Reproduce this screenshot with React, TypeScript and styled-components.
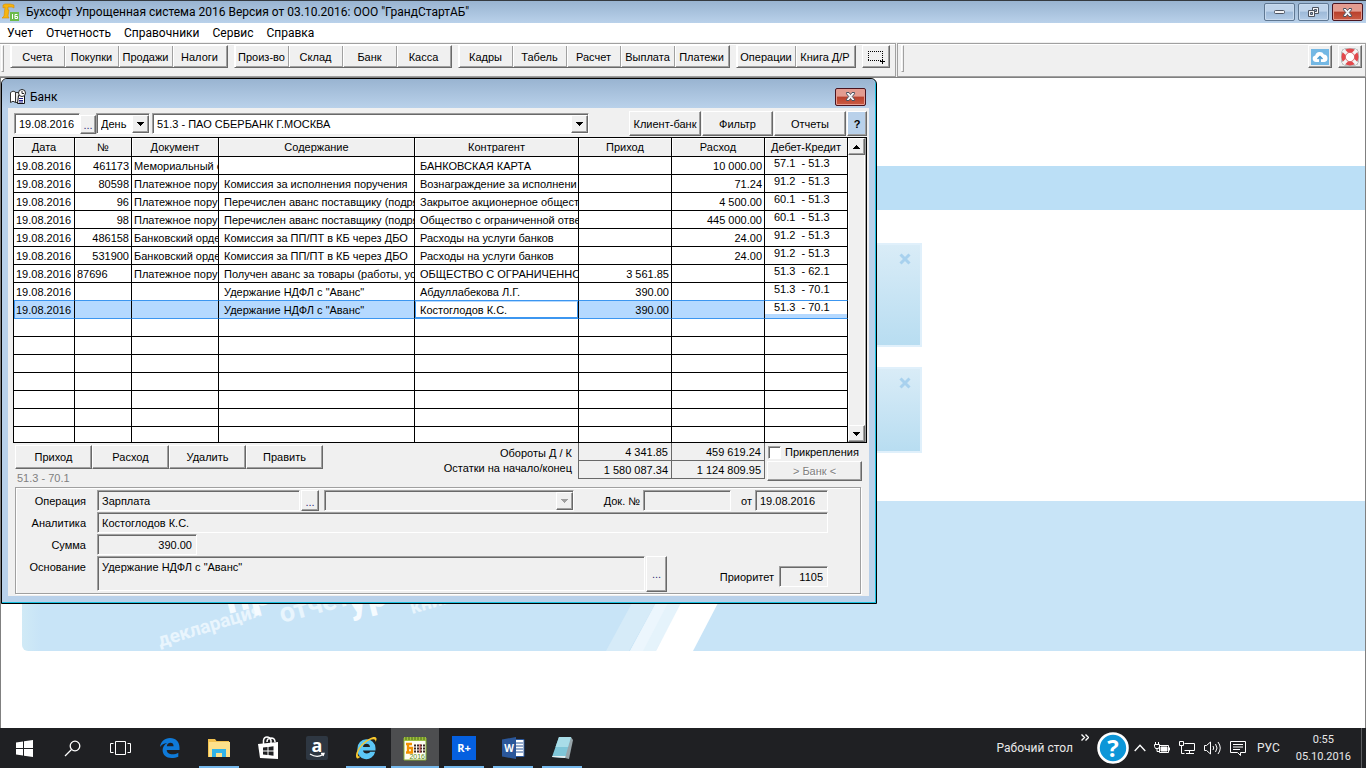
import React from "react";
import styled, { createGlobalStyle, css } from "styled-components";

const uiFont = `"Liberation Sans", Arial, sans-serif`;
const shellFont = `Roboto, "Open Sans", sans-serif`;

const Global = createGlobalStyle`
  * { box-sizing: border-box; }
  body { margin: 0; background: #fff; font: 11px/14px ${uiFont}; color: #000; }
  button, input, select, textarea { font: inherit; color: inherit; margin: 0; border-radius: 0; outline: none; }
`;

const raised = css`
  border: 1px solid;
  border-color: #fff #696969 #696969 #fff;
  box-shadow: inset -1px -1px #a0a0a0;
  background: #f0f0f0;
`;
const sunken = css`
  border: 1px solid;
  border-color: #a0a0a0 #fff #fff #a0a0a0;
  box-shadow: inset 1px 1px #696969;
`;

const Page = styled.div`
  min-height: 100vh;
  display: flex;
  flex-direction: column;
`;

/* ---------- main title bar, menu, toolbar ---------- */

const TitleBar = styled.header`
  height: 23px;
  display: flex;
  align-items: center;
  padding: 0 3px 0 2px;
  gap: 7px;
  border-top: 1px solid #353a40;
  background: linear-gradient(#99b4d1, #b9d1ea);
  font: 12px/20px ${shellFont};
  white-space: nowrap;
`;
const Caption = styled.h1`
  flex: 1;
  margin: 0;
  font: inherit;
`;
const CaptionButtons = styled.div`
  display: flex;
  gap: 3px;
`;
const CaptionButton = styled.button<{ $close?: boolean }>`
  width: 31px;
  height: 18px;
  padding: 0;
  display: grid;
  place-items: center;
  border-radius: 2px;
  border: 1px solid ${(p) => (p.$close ? "#4a1520" : "#5f7792")};
  box-shadow: inset 0 0 0 1px ${(p) => (p.$close ? "#e49c92" : "#c8daee")};
  background: ${(p) =>
    p.$close
      ? "linear-gradient(#e39c90 45%, #b8402c 50%, #cb5c44)"
      : "linear-gradient(#bfd3ea 45%, #9db9d8 50%, #b3cbe6)"};
`;
const MenuBar = styled.nav`
  height: 19px;
  display: flex;
  gap: 13px;
  padding: 0 7px;
  background: #fff;
  font: 12px/20px ${shellFont};
`;
const MenuLink = styled.a`
  color: #000;
  text-decoration: none;
`;
const Rebars = styled.div`
  display: flex;
  gap: 1px;
  height: 35px;
  border-top: 1px solid #f0f0f0;
  background: #f0f0f0;
`;
const Band = styled.div<{ $grow?: boolean }>`
  flex: ${(p) => (p.$grow ? "1" : "none")};
  display: flex;
  gap: 6px;
  align-items: flex-start;
  padding: ${(p) => (p.$grow ? "1px 3px 0 3px" : "1px 5px 0 1px")};
  border: 1px solid #a0a0a0;
  border-left-width: ${(p) => (p.$grow ? "1px" : "0")};
  box-shadow: inset 0 1px #fff;
`;
const Gripper = styled.i`
  width: 3px;
  height: 27px;
  border: 1px solid;
  border-color: #fff #a0a0a0 #a0a0a0 #fff;
`;
const ToolGroup = styled.div`
  display: flex;
  border: 1px solid;
  border-color: #fff #696969 #696969 #fff;
`;
const ToolButton = styled.button<{ $wide?: boolean }>`
  width: ${(p) => (p.$wide ? "59px" : "54px")};
  height: 21px;
  padding: 0;
  border: 0;
  border-right: 1px solid #a0a0a0;
  box-shadow: inset 1px 0 #fff, inset 0 -1px #a0a0a0;
  background: #f0f0f0;
  white-space: nowrap;
`;
const IconTool = styled.button<{ $w: number }>`
  ${raised}
  width: ${(p) => p.$w}px;
  height: 23px;
  padding: 0;
  display: grid;
  place-items: center;
`;
const Spring = styled.span`
  flex: 1;
`;

/* ---------- workspace and its backdrop ---------- */

const Workspace = styled.main`
  position: relative;
  flex: 1;
  min-height: 600px;
  overflow: hidden;
  border: 1px solid #808080;
  border-bottom: 0;
  background: #fff;
`;
const Backdrop = styled.div`
  padding-top: 88px;
`;
const Banner = styled.div`
  height: 44px;
  margin-bottom: 33px;
  background: #bbdff6;
`;
const Tile = styled.div<{ $h: number }>`
  width: 900px;
  height: ${(p) => p.$h}px;
  margin: 0 0 20px 21px;
  padding: 8px 9px;
  text-align: right;
  border: 2px solid #e0f0fb;
  background: linear-gradient(#d9ecf7, #b8ddf1);
`;
const Promo = styled.div`
  height: 150px;
  margin: 48px 0 0 21px;
  border-radius: 0 0 0 6px;
  overflow: hidden;
  background: linear-gradient(90deg, #d0eaf6, #c8e4f7 18px);
`;

/* ---------- bank window ---------- */

const BankWindow = styled.section`
  position: absolute;
  left: 0;
  top: 0;
  width: 876px;
  border: 1px solid #000;
  border-radius: 6px 6px 0 0;
  background: #b9d1ea;
  box-shadow: inset -1px -1px #18c0e0;
  padding: 0 7px 7px 6px;
`;
const WindowTitle = styled.div`
  display: flex;
  align-items: center;
  gap: 3px;
  height: 29px;
  margin: 0 -6px;
  padding: 6px 9px 0 8px;
  border-radius: 5px 5px 0 0;
  background: linear-gradient(#99b4d1, #b9d1ea);
  font: 12px/20px ${shellFont};
`;
const WindowName = styled.h2`
  flex: 1;
  margin: 0;
  font: inherit;
`;
const Client = styled.div`
  padding: 3px 2px 2px 5px;
  background: #f0f0f0;
`;
const FilterRow = styled.div`
  display: flex;
  height: 26px;
  padding-left: 1px;
  align-items: flex-start;
`;
const Field = styled.input<{ $w?: number }>`
  ${sunken}
  width: ${(p) => (p.$w ? `${p.$w}px` : "100%")};
  height: 21px;
  padding: 1px 4px 0;
  background: ${(p) => (p.readOnly ? "#f0f0f0" : "#fff")};
`;
const NumberField = styled(Field)`
  text-align: right;
`;
const DateSlot = styled.div`
  display: flex;
  align-items: flex-end;
  padding-top: 2px;
`;
const Dots = styled.button<{ $w?: number; $h?: number }>`
  ${raised}
  flex: none;
  width: ${(p) => p.$w ?? 16}px;
  height: ${(p) => p.$h ?? 19}px;
  padding: 0;
  color: #30307a;
`;
const Combo = styled.div<{ $w: number }>`
  position: relative;
  width: ${(p) => p.$w}px;
  height: 21px;
`;
const ComboSelect = styled.select`
  ${sunken}
  appearance: none;
  width: 100%;
  height: 21px;
  padding: 0 20px 0 4px;
  background: #fff;
  opacity: 1;
  &:disabled { background: #f0f0f0; }
`;
const ComboArrow = styled.span<{ $off?: boolean }>`
  ${raised}
  position: absolute;
  right: 1px;
  top: 2px;
  width: 17px;
  height: 18px;
  display: grid;
  place-items: center;
  pointer-events: none;
  color: ${(p) => (p.$off ? "#a0a0a0" : "#000")};
`;
const PushButton = styled.button<{ $w: number; $h?: number }>`
  ${raised}
  width: ${(p) => p.$w}px;
  height: ${(p) => p.$h ?? 25}px;
  padding: 0;
  &:disabled { color: #808080; text-shadow: 1px 1px #fff; }
`;
const HelpButton = styled(PushButton)`
  background: #b9d1ea;
  font-weight: 700;
`;
const FilterCombos = styled.div`
  flex: 1;
  display: flex;
  gap: 2px;
  padding-top: 2px;
`;
const FilterActions = styled.div`
  display: flex;
  gap: 1px;
`;

/* ---------- journal table ---------- */

const GridFrame = styled.div`
  display: flex;
  border: 1px solid #000;
  border-bottom: 0;
`;
const Journal = styled.table`
  width: calc(100% - 18px);
  table-layout: fixed;
  border-collapse: separate;
  border-spacing: 0;
`;
const Head = styled.th`
  height: 19px;
  padding: 1px 0 0;
  font-weight: 400;
  line-height: 17px;
  border: solid #000;
  border-width: 0 1px 1px 0;
  background: #f0f0f0;
  box-shadow: inset 1px 1px #fff;
  white-space: nowrap;
`;
const Cell = styled.td<{ $num?: boolean; $indent?: boolean; $editing?: boolean }>`
  height: 18px;
  padding: ${(p) => (p.$editing ? "0" : p.$indent ? "1px 0 0 5px" : "1px 2px 0")};
  line-height: 16px;
  text-align: ${(p) => (p.$num ? "right" : "left")};
  vertical-align: top;
  white-space: nowrap;
  overflow: hidden;
  border: solid #000;
  border-width: 0 1px 1px 0;
`;
const Row = styled.tr<{ $selected?: boolean; $above?: boolean; $last?: boolean }>`
  background: ${(p) => (p.$selected ? "#b5d9ff" : "#fff")};
  ${(p) => (p.$selected || p.$above) && css`${Cell} { border-bottom-color: #3c96f0; }`}
  ${(p) => p.$selected && css`${Cell}:first-child { box-shadow: inset 1px 0 #3c96f0; }`}
  ${(p) => p.$last && css`${Cell} { height: 16px; line-height: 14px; }`}
`;
const Account = styled.span`
  display: block;
  height: 13px;
  padding-left: 9px;
  line-height: 12px;
  white-space: pre;
  background: #fff;
`;
const AccountCell = styled(Cell)`
  padding: 0;
`;
const CellEditor = styled.input`
  display: block;
  width: 100%;
  height: 17px;
  padding: 0 4px;
  line-height: 15px;
  border: 1px solid #3c96f0;
  border-top-color: #b5d9ff;
  background: #fff;
`;
const ScrollTrack = styled.div`
  width: 18px;
  display: flex;
  flex-direction: column;
  justify-content: space-between;
  border-bottom: 1px solid #000;
  background: #f0f0f0;
  box-shadow: inset -1px 0 #a0a0a0, inset -2px 0 #fff, inset 1px 0 #fff, inset 2px 0 #f0f0f0;
`;
const ScrollArrow = styled.button`
  ${raised}
  width: 17px;
  height: 17px;
  padding: 0;
  display: grid;
  place-items: center;
`;

/* ---------- totals strip ---------- */

const Strip = styled.div`
  display: flex;
  height: 44px;
`;
const StripLeft = styled.div`
  padding: 2px 0 0 2px;
`;
const ButtonRow = styled.div`
  display: flex;
`;
const Status = styled.p`
  margin: 2px 0 0 2px;
  color: #808080;
`;
const TotalLabels = styled.div`
  flex: 1;
  padding: 3px 6px 0 0;
  text-align: right;
  line-height: 15px;
`;
const Totals = styled.table`
  align-self: flex-start;
  table-layout: fixed;
  width: 187px;
  border-collapse: separate;
  border-spacing: 0;
  border-left: 1px solid #696969;
`;
const TotalCell = styled.td`
  height: 18px;
  padding: 1px 3px 0;
  line-height: 16px;
  text-align: right;
  border: solid #696969;
  border-width: 0 1px 1px 0;
`;
const StripRight = styled.div`
  width: 102px;
  padding: 2px 0 0 2px;
  display: flex;
  flex-direction: column;
  gap: 2px;
`;
const CheckLabel = styled.label`
  display: flex;
  align-items: center;
  gap: 4px;
  height: 14px;
  padding-left: 1px;
`;
const Check = styled.input`
  ${sunken}
  appearance: none;
  width: 13px;
  height: 13px;
  background: #fff;
`;

/* ---------- details ---------- */

const Details = styled.fieldset`
  margin: 0 6px 0 2px;
  min-width: 0;
  height: 107px;
  padding: 2px 32px 0 0;
  border: 1px solid #a0a0a0;
  box-shadow: inset 1px 1px #fff, 1px 1px #fff;
`;
const Line = styled.div`
  display: flex;
  align-items: flex-start;
  height: 22px;
  line-height: 22px;
`;
const FieldLabel = styled.label`
  flex: none;
  width: 81px;
  padding-right: 11px;
  text-align: right;
`;
const SideLabel = styled.label`
  flex: 1;
  padding-right: 3px;
  text-align: right;
`;
const Gap = styled.span<{ $w: number }>`
  width: ${(p) => p.$w}px;
`;
const Memo = styled.textarea`
  ${sunken}
  width: 548px;
  height: 35px;
  padding: 3px 4px;
  resize: none;
  line-height: 14px;
  background: #f0f0f0;
`;
const Priority = styled.div`
  flex: 1;
  display: flex;
  padding-top: 10px;
`;
const PriorityLabel = styled(SideLabel)`
  padding-right: 5px;
`;

/* ---------- taskbar ---------- */

const Taskbar = styled.footer`
  height: 40px;
  display: flex;
  justify-content: space-between;
  background: #1f2023;
  color: #e8e8e8;
  font: 12px/16px ${shellFont};
`;
const TaskIcons = styled.div`
  display: flex;
`;
const Apps = styled.div`
  display: flex;
  gap: 1px;
  padding-left: 2px;
`;
const Task = styled.button<{ $running?: boolean; $active?: boolean }>`
  width: 48px;
  height: 40px;
  padding: 0;
  border: 0;
  display: grid;
  place-items: center;
  background: ${(p) => (p.$active ? "#4d4e50" : "transparent")};
  ${(p) =>
    (p.$running || p.$active) &&
    css`
      background-image: linear-gradient(#76b9ed, #76b9ed);
      background-repeat: no-repeat;
      background-size: ${p.$active ? "48px" : "40px"} 2px;
      background-position: center bottom;
    `}
`;
const Tray = styled.div`
  display: flex;
  align-items: center;
  gap: 8px;
  white-space: nowrap;
`;
const Overflow = styled.span`
  align-self: flex-start;
  padding-top: 1px;
`;
const HelpSlot = styled.span`
  display: flex;
  margin-right: -3px;
`;
const Language = styled.span`
  padding-left: 3px;
`;
const Clock = styled.time`
  padding: 0 10px 0 8px;
  text-align: center;
  font-size: 11px;
  line-height: 17px;
`;
const Peek = styled.i`
  width: 5px;
  height: 40px;
  margin-left: -8px;
  border-left: 1px solid #5c5d60;
`;

/* ---------- drawings ---------- */

const CloseMark = () => (
  <svg width="13" height="11" viewBox="0 0 13 11" aria-hidden="true">
    <path d="M2.5 1.5h2.5l1.5 2 1.5-2h2.5v1.3L8.3 5.5l2.2 2.7v1.3H8l-1.5-2-1.5 2H2.5V8.2l2.2-2.7-2.2-2.7z" fill="#f4f4f6" stroke="#4c5360" />
  </svg>
);
const MinMark = () => (
  <svg width="12" height="6" viewBox="0 0 12 6" aria-hidden="true">
    <rect x=".5" y="1.5" width="10" height="3" rx="1" fill="#f4f4f6" stroke="#4c5360" />
  </svg>
);
const RestoreMark = () => (
  <svg width="13" height="11" viewBox="0 0 13 11" aria-hidden="true">
    <path d="M5.500.5h6v6h-6z" fill="#f4f4f6" stroke="#4c5360" />
    <path d="M7.500 2.500h2v2h-2z" fill="#8ba7c6" stroke="#4c5360" />
    <path d="M1.500 3.500h6v6h-6z" fill="#f4f4f6" stroke="#4c5360" />
    <path d="M3.500 5.500h2v2h-2z" fill="#8ba7c6" stroke="#4c5360" />
  </svg>
);
const Triangle = ({ up = false }: { up?: boolean }) => (
  <svg width="7" height="4" viewBox="0 0 7 4" aria-hidden="true" shapeRendering="crispEdges">
    <path d={up ? "M0 4h7L3.500 0z" : "M0 0h7L3.500 4z"} fill="currentColor" />
  </svg>
);
const AppLogo = () => (
  <svg width="17" height="18" viewBox="0 0 17 18" aria-hidden="true">
    <path d="M1 2l2-1h5l4 1v3l-2-1H6v3h1l-1 6 1 2H0l2-2 1-9-2 1z" fill="#f6b50f" stroke="#d98b00" strokeWidth=".6" />
    <path d="M8 9h9v9H8z" fill="#6cbb4a" />
    <path d="M10.500 11v5M15.500 11.500H13v4h2.500v-2H13" stroke="#fff" fill="none" />
  </svg>
);
const BookIcon = () => (
  <svg width="17" height="16" viewBox="0 0 17 16" aria-hidden="true">
    <path d="M.5 3.500Q3 1 5.500 3v10.500Q3 11 .5 13.500z" fill="#fff" stroke="#333" />
    <path d="M5.500 3.500h4v10h-4z" fill="#e8e8e8" stroke="#333" />
    <path d="M8.500 6.500h6v8h-7z" fill="#fff" stroke="#111" />
    <path d="M9 9.500h4M9 11.500h4M9 13h4" stroke="#22228a" />
    <circle cx="12" cy="4" r="3.500" fill="#fff" stroke="#222" />
    <path d="M12 2v2.500h2" stroke="#222" fill="none" />
  </svg>
);
const MarqueeIcon = () => (
  <svg width="18" height="14" viewBox="0 0 18 14" shapeRendering="crispEdges" aria-hidden="true">
    <path d="M1 1.500h14M1 10.500h14M1.500 1v10M15.500 1v8" stroke="#000" strokeDasharray="1 1" fill="none" />
    <path d="M13 11.500h5M15.500 9v5" stroke="#000" />
  </svg>
);
const CloudIcon = () => (
  <svg width="18" height="16" viewBox="0 0 18 16" aria-hidden="true">
    <path d="M0 0h18v16H0z" fill="#74b8e4" />
    <path d="M5 13a3.300 3.300 0 0 1-.8-6.500A4.800 4.800 0 0 1 13 5.500 3.800 3.800 0 0 1 13.500 13z" fill="#fff" />
    <path d="M9 13V8M6.500 10L9 7.500 11.500 10" stroke="#4a9bd0" strokeWidth="1.500" fill="none" />
  </svg>
);
const LifeRing = () => (
  <svg width="18" height="18" viewBox="0 0 18 18" aria-hidden="true">
    <rect x="1" y="1" width="16" height="16" rx="3" fill="none" stroke="#8d8d8d" strokeWidth="1" />
    <circle cx="9" cy="9" r="6.500" fill="#fff" stroke="#e4484c" strokeWidth="4" />
    <path d="M2 2l4 4M16 2l-4 4M2 16l4-4M16 16l-4-4" stroke="#f4f4f4" strokeWidth="3.400" />
    <circle cx="9" cy="9" r="4.600" fill="#fff" stroke="#c8393e" strokeWidth=".7" />
  </svg>
);
const TileCross = () => (
  <svg width="12" height="12" viewBox="0 0 12 12" aria-hidden="true">
    <path d="M1.500 1.500l9 9M10.500 1.500l-9 9" stroke="#a8d1ee" strokeWidth="3" />
  </svg>
);
const PromoArt = () => (
  <svg width="720" height="150" viewBox="0 0 720 150" aria-hidden="true">
    <path d="M610 102h24L607 150h-23z" fill="#d6ebf8" />
    <path d="M634 102h26L634 150h-26z" fill="#e5f3fb" />
    <path d="M634 102h12L621 150h-13z" fill="#ecf6fd" />
    <path d="M659 102h37L671 150h-37z" fill="#fff" />
    <g fontFamily="Roboto" fontWeight="700" fill="#e9f5fd">
      <text transform="translate(138 146) rotate(-17)" fontSize="19">декларация</text>
      <text transform="translate(260 122) rotate(-15)" fontSize="27">отчет</text>
      <text transform="translate(206 113) rotate(-14)" fontSize="42" fill="#f6fbff">пр</text>
      <text transform="translate(328 113) rotate(-14)" fontSize="38" fill="#f6fbff">ур</text>
      <text transform="translate(390 113) rotate(-16)" fontSize="19">книга</text>
    </g>
  </svg>
);

const StartIcon = () => (
  <svg width="17" height="17" viewBox="0 0 17 17" aria-hidden="true">
    <path d="M0 2.500L7 1.500V8H0zM8 1.300L17 0v8H8zM0 9h7v6.500l-7-1zM8 9h9v8l-9-1.300z" fill="#fff" />
  </svg>
);
const SearchIcon = () => (
  <svg width="17" height="17" viewBox="0 0 17 17" fill="none" stroke="#fff" strokeWidth="1.300" aria-hidden="true">
    <circle cx="11" cy="6" r="4.800" />
    <path d="M7.500 9.500L1 16" />
  </svg>
);
const TaskViewIcon = () => (
  <svg width="21" height="14" viewBox="0 0 21 14" fill="none" stroke="#fff" aria-hidden="true">
    <path d="M5.500.5h10v13h-10zM3.500 2.500h-3v9h3M17.500 2.500h3v9h-3" />
  </svg>
);
const EdgeIcon = () => (
  <svg width="20" height="20" viewBox="0 0 20 20" aria-hidden="true">
    <path d="M0 9C.8 3.500 4.500 0 10 0c6 0 9.500 4 9.500 9.500V12H6.700c.3 3 2.800 4.300 5.600 4.300 2.300 0 4.300-.6 6-1.600v4C16.500 19.600 14 20 11.600 20 6 20 2.600 16.800 2.600 12.300c0-3.300 1.800-5.800 4.600-7.300C3.700 5.400 1.500 6.700 0 9zm6.800-.7h6.800C13.600 5.800 12.400 4.700 10.400 4.700S7.100 6 6.800 8.300z" fill="#0f7ad8" />
  </svg>
);
const FolderIcon = () => (
  <svg width="22" height="20" viewBox="0 0 22 20" aria-hidden="true">
    <path d="M0 1h7l1.500 2H21v16H0z" fill="#f2c14f" />
    <path d="M1 4h21v15H1z" fill="#fde18b" />
    <path d="M4 11h14v8h-4v-4H8v4H4z" fill="#31b4e8" />
  </svg>
);
const StoreIcon = () => (
  <svg width="21" height="24" viewBox="0 0 21 24" aria-hidden="true">
    <path d="M5.500 8V4.500Q6 1 9 1t4 3.500V8M9 6q0-4 4-4t4 4" fill="none" stroke="#fff" strokeWidth="1.500" />
    <path d="M0 8l20-2v17L2 22z" fill="#fff" />
    <path d="M5 11.500l4.500-.5v3.500H5zM10.500 10.900l5-.6v4.200h-5zM5 15.500h4.500V19L5 18.500zM10.500 15.500h5v4.200l-5-.6z" fill="#1f2023" />
  </svg>
);
const AmazonIcon = () => (
  <svg width="22" height="24" viewBox="0 0 22 24" overflow="visible" aria-hidden="true">
    <rect width="22" height="24" rx="2" fill="#2e3742" />
    <text x="11" y="16" textAnchor="middle" fontFamily="Open Sans" fontWeight="700" fontSize="18" fill="#fff">a</text>
    <path d="M4 18q7 4.500 13 .5M15 17.500h3l-1 2.500" stroke="#fff" strokeWidth="1.300" fill="none" />
  </svg>
);
const IeIcon = () => (
  <svg width="24" height="24" viewBox="0 0 24 24" aria-hidden="true">
    <path d="M3.500 12.500a9 9 0 0 1 18-.5v2.500H9c.3 2 1.800 3 3.800 3 1.600 0 2.800-.6 3.400-1.700h5a9 9 0 0 1-17.700-3.300zm5.500-1.500h7C15.800 9 14.500 7.800 12.500 7.800S9.300 9 9 11z" fill="#5cc6f5" />
    <path d="M3.500 22.500C0 21 3 12.500 9 7S22-1 22.500 2.500c.2 1-.3 2.500-1 3.500.3-3-2-3.500-5.500-2C9 7 4 14 3.800 18.500c0 1.500.8 2.300 2.700 2-1 1-2 2.200-3 2z" fill="#f8c82e" />
  </svg>
);
const LedgerIcon = () => (
  <svg width="24" height="25" viewBox="0 0 24 25" aria-hidden="true">
    <path d="M1 2h22v22H1z" fill="#fdfdf2" stroke="#8aad34" />
    <path d="M1 1h22v4H1z" fill="#9dbf3f" />
    <path d="M3 1v3M6 1v3M9 1v3M12 1v3M15 1v3M18 1v3M21 1v3" stroke="#4d6c14" />
    <path d="M3 8h6M5 8v8M3 16.500h6V12H5" stroke="#f29100" strokeWidth="2.300" fill="none" />
    <path d="M11 9.500h11M11 12.500h11M11 15.500h11" stroke="#3c2626" strokeWidth="2" strokeDasharray="2 1" />
    <path d="M17 8v9" stroke="#d13a2c" />
    <text x="22" y="23" textAnchor="end" fontFamily="Liberation Sans" fontSize="7" fill="#5c8a16">2016</text>
  </svg>
);
const RPlusIcon = () => (
  <svg width="24" height="24" viewBox="0 0 24 24" aria-hidden="true">
    <path d="M0 0h24v24H0z" fill="#0560e0" />
    <text x="12" y="16" textAnchor="middle" fontFamily="Open Sans" fontWeight="700" fontSize="11" fill="#fff">R+</text>
  </svg>
);
const WordIcon = () => (
  <svg width="23" height="22" viewBox="0 0 23 22" aria-hidden="true">
    <path d="M12 2.500h10v17H12z" fill="#fff" stroke="#2b579a" />
    <path d="M14 6h7M14 9h7M14 12h7M14 15h7" stroke="#2b579a" />
    <path d="M0 2.500L14 0v22L0 19.500z" fill="#2b579a" />
    <text x="7" y="15" textAnchor="middle" fontFamily="Open Sans" fontWeight="700" fontSize="10" fill="#fff">W</text>
  </svg>
);
const NotepadIcon = () => (
  <svg width="23" height="24" viewBox="0 0 23 24" aria-hidden="true">
    <path d="M8 1h12l2 3-4 19-4-1z" fill="#98a5aa" />
    <path d="M8 1h12l-6 21-13-1z" fill="#7fc6d8" />
    <path d="M8 1h12l-3 10H4.500z" fill="#a9dde8" />
    <path d="M1 21l13 1 .500-2H1.500z" fill="#e6eef0" />
  </svg>
);
const HelpIcon = () => (
  <svg width="32" height="32" viewBox="0 0 32 32" aria-hidden="true">
    <circle cx="16" cy="16" r="14.500" fill="#0d96d8" stroke="#fff" strokeWidth="2.600" />
    <text x="16" y="24.500" textAnchor="middle" fontFamily="Open Sans" fontWeight="700" fontSize="24" fill="#fff">?</text>
  </svg>
);
const trayStroke = { fill: "none", stroke: "#fff", "aria-hidden": true } as const;
const ChevronIcon = () => (
  <svg width="12" height="8" viewBox="0 0 12 8" {...trayStroke} strokeWidth="1.300"><path d="M.7 7L6 1.200 11.300 7" /></svg>
);
const PowerIcon = () => (
  <svg width="17" height="14" viewBox="0 0 17 14" {...trayStroke}>
    <path d="M5.500 4.500h9v7h-9zM15.500 6.500v3M.5 3.500h5v2l-1 2h-3l-1-2zM1.500 3V1M4.500 3V1M3 7.500v3h2" />
    <path d="M7 6h6v4H7z" fill="#fff" />
  </svg>
);
const NetworkIcon = () => (
  <svg width="17" height="14" viewBox="0 0 17 14" {...trayStroke}>
    <path d="M5.500 2.500h10v7h-10M10.500 9.500v3M7 12.500h8M.5.5h4v4h-4zM2.500 4.500v8h3" />
  </svg>
);
const SoundIcon = () => (
  <svg width="18" height="14" viewBox="0 0 18 14" {...trayStroke}>
    <path d="M.5 4.500h2l4-3.500v12l-4-3.500h-2zM9 5q1.500 2 0 4M11.500 3q3 4 0 8M14 1q4.500 6 0 12" />
  </svg>
);
const NoticeIcon = () => (
  <svg width="16" height="15" viewBox="0 0 16 15" {...trayStroke}>
    <path d="M.5.5h15v11h-5v3l-3-3h-7zM3 3.500h10M3 6h10M3 8.500h7" />
  </svg>
);
const MoreIcon = () => (
  <svg width="8" height="7" viewBox="0 0 8 7" {...trayStroke} strokeWidth="1.400"><path d="M.5.5l3 3-3 3M4.500.5l3 3-3 3" /></svg>
);

/* ---------- data ---------- */

const menu = ["Учет", "Отчетность", "Справочники", "Сервис", "Справка"];
const toolGroups = [
  ["Счета", "Покупки", "Продажи", "Налоги"],
  ["Произ-во", "Склад", "Банк", "Касса"],
  ["Кадры", "Табель", "Расчет", "Выплата", "Платежи"],
];
const columns: [string, number][] = [
  ["Дата", 61], ["№", 57], ["Документ", 87], ["Содержание", 196],
  ["Контрагент", 164], ["Приход", 93], ["Расход", 93], ["Дебет-Кредит", 83],
];
type Entry = [string, string, string, string, string, string, string];
const entries: Entry[] = [
  ["461173", "Мемориальный о", "", "БАНКОВСКАЯ КАРТА", "", "10 000.00", "57.1  - 51.3"],
  ["80598", "Платежное пору", "Комиссия за исполнения поручения", "Вознаграждение за исполнени", "", "71.24", "91.2  - 51.3"],
  ["96", "Платежное пору", "Перечислен аванс поставщику (подря", "Закрытое акционерное общест", "", "4 500.00", "60.1  - 51.3"],
  ["98", "Платежное пору", "Перечислен аванс поставщику (подря", "Общество с ограниченной отве", "", "445 000.00", "60.1  - 51.3"],
  ["486158", "Банковский орде", "Комиссия за ПП/ПТ в КБ через ДБО", "Расходы на услуги банков", "", "24.00", "91.2  - 51.3"],
  ["531900", "Банковский орде", "Комиссия за ПП/ПТ в КБ через ДБО", "Расходы на услуги банков", "", "24.00", "91.2  - 51.3"],
  ["87696", "Платежное пору", "Получен аванс за товары (работы, ус", "ОБЩЕСТВО С ОГРАНИЧЕННО", "3 561.85", "", "51.3  - 62.1"],
  ["", "", "Удержание НДФЛ с \"Аванс\"", "Абдуллабекова Л.Г.", "390.00", "", "51.3  - 70.1"],
  ["", "", "Удержание НДФЛ с \"Аванс\"", "Костоглодов К.С.", "390.00", "", "51.3  - 70.1"],
];
const selected = 8;
const blankRows = 7;

function JournalGrid() {
  return (
    <GridFrame>
      <Journal>
        <colgroup>{columns.map(([name, w]) => <col key={name} width={w} />)}</colgroup>
        <thead>
          <tr>{columns.map(([name]) => <Head key={name} scope="col">{name}</Head>)}</tr>
        </thead>
        <tbody>
          {entries.map(([no, doc, note, party, income, expense, account], i) => (
            <Row key={i} $selected={i === selected} $above={i === selected - 1}>
              <Cell>19.08.2016</Cell>
              <Cell $num={no !== "87696"}>{no}</Cell>
              <Cell>{doc}</Cell>
              <Cell $indent>{note}</Cell>
              {i === selected ? (
                <Cell $editing><CellEditor aria-label="Контрагент" defaultValue={party} /></Cell>
              ) : (
                <Cell $indent>{party}</Cell>
              )}
              <Cell $num>{income}</Cell>
              <Cell $num>{expense}</Cell>
              <AccountCell><Account>{account}</Account></AccountCell>
            </Row>
          ))}
          {Array.from({ length: blankRows }, (_, r) => (
            <Row key={`blank${r}`} $last={r === blankRows - 1}>
              {columns.map(([name]) => <Cell key={name} />)}
            </Row>
          ))}
        </tbody>
      </Journal>
      <ScrollTrack>
        <ScrollArrow aria-label="Вверх"><Triangle up /></ScrollArrow>
        <ScrollArrow aria-label="Вниз"><Triangle /></ScrollArrow>
      </ScrollTrack>
    </GridFrame>
  );
}

function Bank() {
  return (
    <BankWindow>
      <WindowTitle>
        <BookIcon />
        <WindowName>Банк</WindowName>
        <CaptionButton $close aria-label="Закрыть"><CloseMark /></CaptionButton>
      </WindowTitle>
      <Client>
        <FilterRow>
          <DateSlot>
            <Field $w={66} aria-label="Дата" defaultValue="19.08.2016" />
            <Dots aria-label="Выбрать дату">...</Dots>
          </DateSlot>
          <FilterCombos>
            <Combo $w={54}>
              <ComboSelect aria-label="Период"><option>День</option></ComboSelect>
              <ComboArrow><Triangle /></ComboArrow>
            </Combo>
            <Combo $w={437}>
              <ComboSelect aria-label="Счет"><option>51.3 - ПАО СБЕРБАНК Г.МОСКВА</option></ComboSelect>
              <ComboArrow><Triangle /></ComboArrow>
            </Combo>
          </FilterCombos>
          <FilterActions>
            <PushButton $w={72}>Клиент-банк</PushButton>
            <PushButton $w={71}>Фильтр</PushButton>
            <PushButton $w={72}>Отчеты</PushButton>
            <HelpButton $w={20}>?</HelpButton>
          </FilterActions>
        </FilterRow>
        <JournalGrid />
        <Strip>
          <StripLeft>
            <ButtonRow>
              {["Приход", "Расход", "Удалить", "Править"].map((t) => (
                <PushButton key={t} $w={77} $h={24}>{t}</PushButton>
              ))}
            </ButtonRow>
            <Status>51.3 - 70.1</Status>
          </StripLeft>
          <TotalLabels>
            <div>Обороты Д / К</div>
            <div>Остатки на начало/конец</div>
          </TotalLabels>
          <Totals>
            <tbody>
              <tr><TotalCell>4 341.85</TotalCell><TotalCell>459 619.24</TotalCell></tr>
              <tr><TotalCell>1 580 087.34</TotalCell><TotalCell>1 124 809.95</TotalCell></tr>
            </tbody>
          </Totals>
          <StripRight>
            <CheckLabel><Check type="checkbox" />Прикрепления</CheckLabel>
            <PushButton $w={95} $h={20} disabled>&gt; Банк &lt;</PushButton>
          </StripRight>
        </Strip>
        <Details>
          <Line>
            <FieldLabel htmlFor="op">Операция</FieldLabel>
            <Field id="op" $w={203} readOnly value="Зарплата" />
            <Gap $w={1} />
            <Dots $w={18} $h={21} aria-label="Выбрать операцию">...</Dots>
            <Gap $w={5} />
            <Combo $w={250}>
              <ComboSelect aria-label="Вид операции" disabled />
              <ComboArrow $off><Triangle /></ComboArrow>
            </Combo>
            <SideLabel htmlFor="doc">Док. №</SideLabel>
            <Field id="doc" $w={88} readOnly value="" />
            <Gap $w={10} />
            <label htmlFor="docdate">от</label>
            <Gap $w={3} />
            <Field id="docdate" $w={73} readOnly value="19.08.2016" />
          </Line>
          <Line>
            <FieldLabel htmlFor="an">Аналитика</FieldLabel>
            <Field id="an" readOnly value="Костоглодов К.С." />
          </Line>
          <Line>
            <FieldLabel htmlFor="sum">Сумма</FieldLabel>
            <NumberField id="sum" $w={100} readOnly value="390.00" />
          </Line>
          <Line>
            <FieldLabel htmlFor="base">Основание</FieldLabel>
            <Memo id="base" readOnly value={'Удержание НДФЛ с "Аванс"'} />
            <Gap $w={1} />
            <Dots $w={21} $h={36} aria-label="Править основание">...</Dots>
            <Priority>
              <PriorityLabel htmlFor="prio">Приоритет</PriorityLabel>
              <NumberField id="prio" $w={49} readOnly value="1105" />
            </Priority>
          </Line>
        </Details>
      </Client>
    </BankWindow>
  );
}

export default function App() {
  return (
    <Page>
      <Global />
      <TitleBar>
        <AppLogo />
        <Caption>Бухсофт Упрощенная система 2016 Версия от 03.10.2016: ООО "ГрандСтартАБ"</Caption>
        <CaptionButtons>
          <CaptionButton aria-label="Свернуть"><MinMark /></CaptionButton>
          <CaptionButton aria-label="Восстановить"><RestoreMark /></CaptionButton>
          <CaptionButton $close aria-label="Закрыть"><CloseMark /></CaptionButton>
        </CaptionButtons>
      </TitleBar>
      <MenuBar>
        {menu.map((m) => <MenuLink key={m} href="#">{m}</MenuLink>)}
      </MenuBar>
      <Rebars>
        <Band>
          <Gripper />
          {toolGroups.map((group) => (
            <ToolGroup key={group[0]}>
              {group.map((t) => <ToolButton key={t}>{t}</ToolButton>)}
            </ToolGroup>
          ))}
          <ToolGroup>
            <ToolButton $wide>Операции</ToolButton>
            <ToolButton $wide>Книга Д/Р</ToolButton>
          </ToolGroup>
          <IconTool $w={28} aria-label="Настройка панели"><MarqueeIcon /></IconTool>
        </Band>
        <Band $grow>
          <Gripper />
          <Spring />
          <IconTool $w={24} aria-label="Облако"><CloudIcon /></IconTool>
          <IconTool $w={24} aria-label="Помощь"><LifeRing /></IconTool>
        </Band>
      </Rebars>
      <Workspace>
        <Backdrop>
          <Banner />
          <Tile $h={104}><TileCross /></Tile>
          <Tile $h={86}><TileCross /></Tile>
          <Promo><PromoArt /></Promo>
        </Backdrop>
        <Bank />
      </Workspace>
      <Taskbar>
        <TaskIcons>
          <Task aria-label="Пуск"><StartIcon /></Task>
          <Task aria-label="Поиск"><SearchIcon /></Task>
          <Task aria-label="Представление задач"><TaskViewIcon /></Task>
          <Apps>
            <Task aria-label="Edge"><EdgeIcon /></Task>
            <Task aria-label="Проводник" $running><FolderIcon /></Task>
            <Task aria-label="Магазин"><StoreIcon /></Task>
            <Task aria-label="Amazon"><AmazonIcon /></Task>
            <Task aria-label="Internet Explorer" $running><IeIcon /></Task>
            <Task aria-label="Бухсофт" $active><LedgerIcon /></Task>
            <Task aria-label="R+" $running><RPlusIcon /></Task>
            <Task aria-label="Word" $running><WordIcon /></Task>
            <Task aria-label="Блокнот" $running><NotepadIcon /></Task>
          </Apps>
        </TaskIcons>
        <Tray>
          <span>Рабочий стол</span>
          <Overflow><MoreIcon /></Overflow>
          <HelpSlot><HelpIcon /></HelpSlot>
          <ChevronIcon />
          <PowerIcon />
          <NetworkIcon />
          <SoundIcon />
          <NoticeIcon />
          <Language>РУС</Language>
          <Clock>0:55<br />05.10.2016</Clock>
          <Peek />
        </Tray>
      </Taskbar>
    </Page>
  );
}
